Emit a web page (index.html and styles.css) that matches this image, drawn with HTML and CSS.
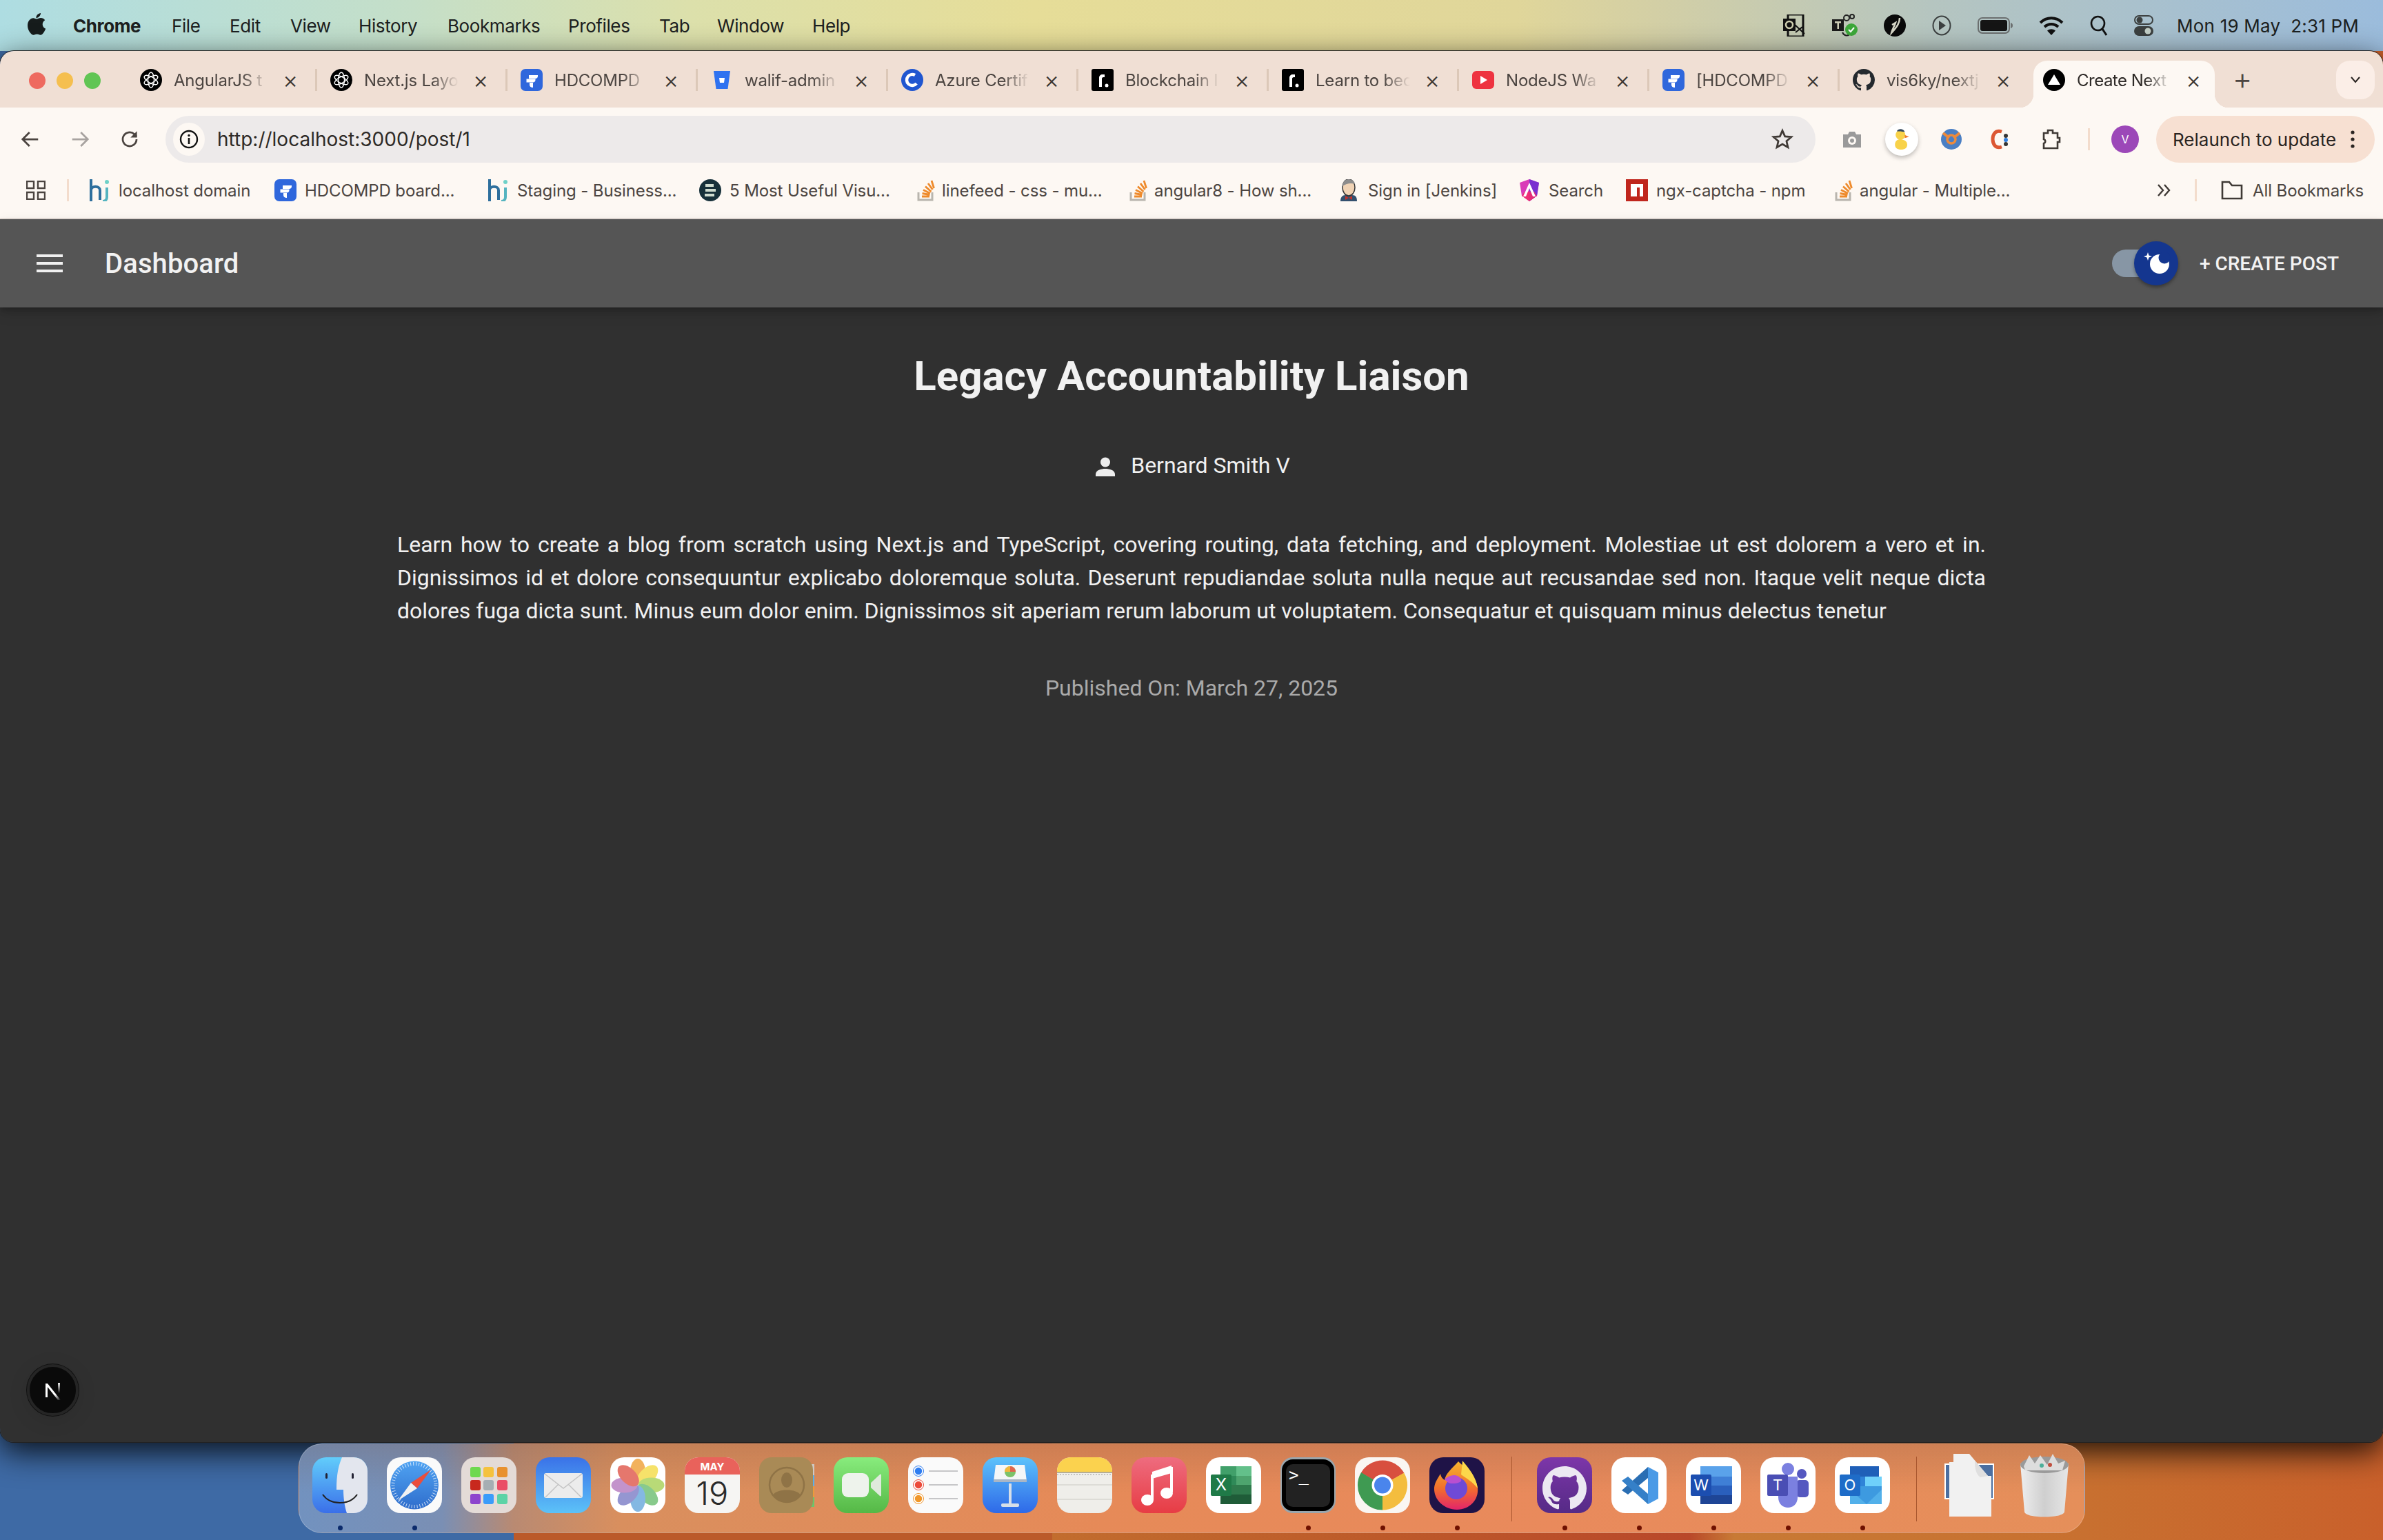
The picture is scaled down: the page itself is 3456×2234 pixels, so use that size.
FILE: index.html
```html
<!DOCTYPE html>
<html lang="en">
<head>
<meta charset="utf-8">
<title>Create Next App</title>
<link rel="stylesheet" href="styles.css">
</head>
<body>
<svg class="defs" aria-hidden="true">
  <defs>
    <linearGradient id="gFinder" x1="0" y1="0" x2="0" y2="1"><stop offset="0" stop-color="#62cdfb"/><stop offset="1" stop-color="#3a6fe9"/></linearGradient>
    <linearGradient id="gSafari" x1="0" y1="0" x2="0" y2="1"><stop offset="0" stop-color="#4fa3f2"/><stop offset="1" stop-color="#2f6dcc"/></linearGradient>
    <linearGradient id="gMail" x1="0" y1="0" x2="0" y2="1"><stop offset="0" stop-color="#3a72e8"/><stop offset="1" stop-color="#5cc2f8"/></linearGradient>
    <linearGradient id="gFace" x1="0" y1="0" x2="0" y2="1"><stop offset="0" stop-color="#88ec7d"/><stop offset="1" stop-color="#55b846"/></linearGradient>
    <linearGradient id="gKey" x1="0" y1="0" x2="0" y2="1"><stop offset="0" stop-color="#5cc2fb"/><stop offset="1" stop-color="#2e69e8"/></linearGradient>
    <linearGradient id="gMusic" x1="0" y1="0" x2="0" y2="1"><stop offset="0" stop-color="#ee6c7f"/><stop offset="1" stop-color="#e73c44"/></linearGradient>
    <linearGradient id="gHub" x1="0" y1="0" x2="0" y2="1"><stop offset="0" stop-color="#7d36a9"/><stop offset="1" stop-color="#552a86"/></linearGradient>
    <linearGradient id="gFox" x1="0" y1="0" x2="0" y2="1"><stop offset="0" stop-color="#f5b52e"/><stop offset=".55" stop-color="#f2702c"/><stop offset="1" stop-color="#e3246a"/></linearGradient>
    <linearGradient id="gTrash" x1="0" y1="0" x2="1" y2="0"><stop offset="0" stop-color="#eeeeee"/><stop offset=".5" stop-color="#cfcfcf"/><stop offset="1" stop-color="#e6e6e6"/></linearGradient>
    <linearGradient id="gN" gradientUnits="userSpaceOnUse" x1="4" y1="3" x2="25" y2="28"><stop offset=".65" stop-color="#fff"/><stop offset="1" stop-color="#fff" stop-opacity="0"/></linearGradient>
    <linearGradient id="gN2" gradientUnits="userSpaceOnUse" x1="0" y1="2" x2="0" y2="18"><stop offset="0" stop-color="#fff"/><stop offset="1" stop-color="#fff" stop-opacity="0"/></linearGradient>
    <symbol id="f-gpt" viewBox="0 0 32 32"><circle cx="16" cy="16" r="16" fill="#000"/><g fill="none" stroke="#fff" stroke-width="1.400"><ellipse cx="16" cy="16" rx="4.500" ry="11"/><ellipse cx="16" cy="16" rx="4.500" ry="11" transform="rotate(60 16 16)"/><ellipse cx="16" cy="16" rx="4.500" ry="11" transform="rotate(120 16 16)"/></g></symbol>
    <symbol id="f-jira" viewBox="0 0 32 32"><rect width="32" height="32" rx="7" fill="#2f67dc"/><path d="M12 9h13v1.5c0 2-1.500 3.500-3.500 3.500H12z M8.500 14.500h13V16c0 2-1.500 3.500-3.500 3.500H8.500z M13 20h5v7c-3 0-5-1.500-5-4z" fill="#fff"/></symbol>
    <symbol id="f-hi" viewBox="0 0 32 32"><path d="M4 0v32M4 16c0-7 13-7 13 0v14" fill="none" stroke="#2e6f9d" stroke-width="4"/><path d="M27 12v14c0 3-2 6-6 6" fill="none" stroke="#55b4c0" stroke-width="4"/><circle cx="27" cy="4" r="3" fill="#6fd1c8"/></symbol>
    <symbol id="f-so" viewBox="0 0 32 32"><path d="M4 19v11h20V19" fill="none" stroke="#b9b5ae" stroke-width="3"/><path d="M9 25h11M9.500 20.500l11 2M11 15.500l10 5M14 10.500l8.500 7.500M18 6l6.500 9M23 2l3.500 11" stroke="#ee8a2b" stroke-width="2.800" fill="none"/></symbol>
    <symbol id="f-gh" viewBox="0 0 24 24"><path fill="currentColor" d="M12 0C5.370 0 0 5.370 0 12c0 5.310 3.435 9.795 8.205 11.385.6.105.825-.255.825-.57 0-.285-.015-1.230-.015-2.235-3.015.555-3.795-.735-4.035-1.410-.135-.345-.72-1.410-1.230-1.695-.42-.225-1.020-.78-.015-.795.945-.015 1.620.87 1.845 1.230 1.080 1.815 2.805 1.305 3.495.99.105-.78.42-1.305.765-1.605-2.670-.3-5.460-1.335-5.460-5.925 0-1.305.465-2.385 1.230-3.225-.12-.3-.54-1.530.12-3.180 0 0 1.005-.315 3.300 1.230.96-.27 1.980-.405 3-.405s2.040.135 3 .405c2.295-1.560 3.300-1.230 3.300-1.230.66 1.650.24 2.880.12 3.180.765.84 1.230 1.905 1.230 3.225 0 4.605-2.805 5.625-5.475 5.925.435.375.81 1.095.81 2.220 0 1.605-.015 2.895-.015 3.300 0 .315.225.69.825.57A12.020 12.020 0 0 0 24 12c0-6.630-5.370-12-12-12z"/></symbol>
    <symbol id="f-r" viewBox="0 0 32 32"><rect width="32" height="32" rx="3" fill="#000"/><path d="M11 26V13c0-3 2-5 5-5h3v4h-2c-1 0-2 1-2 2v12z" fill="#fff"/><circle cx="22" cy="24" r="2.500" fill="#fff"/></symbol>
  </defs>
</svg>

<div class="desktop">
  <header class="menubar">
    <svg class="apple" viewBox="0 0 26 32"><path fill="#161c1c" d="M19 0c.2 3.600-3.300 7.200-6.600 7C12 3.600 15.800.2 19 0zM13 8.500c1.500 0 3.600-1.500 6.200-1.500 2.300 0 4.600 1.100 6 3.200-5.200 3-4.300 10.500 1 12.500-1.400 3.500-4.300 9-7.500 9-1.800 0-2.800-1.200-5-1.200s-3.300 1.200-5 1.200C4.800 31.700 0 24.500 0 18 0 11.500 4.200 7.200 8.300 7.200c2 0 3.500 1.300 4.700 1.300z"/></svg>
    <nav class="menus">
      <span class="menu menu-app">Chrome</span><span class="menu">File</span><span class="menu">Edit</span><span class="menu">View</span><span class="menu">History</span><span class="menu">Bookmarks</span><span class="menu">Profiles</span><span class="menu">Tab</span><span class="menu">Window</span><span class="menu">Help</span>
    </nav>
    <div class="status">
      <svg class="st st-ol" viewBox="0 0 33 32"><rect x="7" y="0" width="22" height="32" fill="none" stroke="#111" stroke-width="3"/><rect x="0" y="6" width="18" height="18" fill="#111"/><circle cx="9" cy="15" r="5" fill="none" stroke="#d0d0b0" stroke-width="2.500"/><path d="M16 14l15 14M18 26l10-8" stroke="#111" stroke-width="2" fill="none"/></svg>
      <svg class="st st-teams" viewBox="0 0 37 34"><rect x="0" y="8" width="17" height="17" fill="#1a1a1a"/><rect x="4" y="11" width="9" height="2.500" fill="#d0d0b8"/><rect x="7.500" y="11" width="2.500" height="11" fill="#d0d0b8"/><circle cx="21" cy="6" r="4" fill="none" stroke="#222" stroke-width="2"/><circle cx="29" cy="4" r="3" fill="none" stroke="#222" stroke-width="2"/><path d="M15 27c3 6 8 5 10 3" fill="none" stroke="#222" stroke-width="2"/><circle cx="28" cy="23" r="9" fill="#3da83a"/><path d="M24 23l3 3 5-6" stroke="#fff" stroke-width="2" fill="none"/></svg>
      <svg class="st st-tm" viewBox="0 0 32 32"><circle cx="16" cy="16" r="16" fill="#0a0a0a"/><path d="M23 5c0 7-3 12-12 22 1-5 4-9 6-15l-5 3" fill="none" stroke="#d8d8c8" stroke-width="2.500"/></svg>
      <svg class="st st-play" viewBox="0 0 28 30"><ellipse cx="14" cy="15" rx="12.500" ry="13.500" fill="none" stroke="#3c4040" stroke-width="2"/><path d="M10 8l10 7-10 7z" fill="#3c4040"/></svg>
      <svg class="st st-batt" viewBox="0 0 51 24"><rect x="1" y="1" width="45" height="22" rx="6" fill="none" stroke="#6c7070" stroke-width="2"/><rect x="4" y="4" width="39" height="16" rx="3" fill="#151515"/><path d="M48 8c2 .5 3 2 3 4s-1 3.500-3 4z" fill="#6c7070"/></svg>
      <svg class="st st-wifi" viewBox="0 0 36 28"><path d="M2 10c9-9 23-9 32 0M8 16c6-5.500 14-5.500 20 0" fill="none" stroke="#111" stroke-width="4"/><path d="M18 28l-6-6.500c3.500-3 8.500-3 12 0z" fill="#111"/></svg>
      <svg class="st st-search" viewBox="0 0 26 30"><ellipse cx="11.500" cy="12" rx="9.500" ry="10" fill="none" stroke="#111" stroke-width="2.600"/><path d="M18 20l6 9" stroke="#111" stroke-width="3"/></svg>
      <svg class="st st-cc" viewBox="0 0 28 30"><rect x="1" y="1" width="26" height="12" rx="6" fill="none" stroke="#3c4040" stroke-width="2"/><circle cx="8" cy="7" r="4.500" fill="#3c4040"/><rect y="16" width="28" height="14" rx="7" fill="#3c4040"/><circle cx="20" cy="23" r="4.500" fill="#c4d0c8"/></svg>
      <span class="clock">Mon 19 May&nbsp;&nbsp;2:31 PM</span>
    </div>
  </header>

  <main class="window">
    <div class="tabstrip">
      <div class="lights"><span class="light light-r"></span><span class="light light-y"></span><span class="light light-g"></span></div>
      <div class="tab"><svg class="fav"><use href="#f-gpt"/></svg><span class="tab-title">AngularJS t</span><span class="tab-x">×</span></div>
      <div class="tab"><svg class="fav"><use href="#f-gpt"/></svg><span class="tab-title">Next.js Layo</span><span class="tab-x">×</span></div>
      <div class="tab"><svg class="fav"><use href="#f-jira"/></svg><span class="tab-title">HDCOMPD</span><span class="tab-x">×</span></div>
      <div class="tab"><svg class="fav" viewBox="0 0 32 32"><path d="M4 3h24l-3.500 26h-17z" fill="#2f72f0"/><path d="M12 13h8l-1 7h-6z" fill="#fff"/></svg><span class="tab-title">walif-admin</span><span class="tab-x">×</span></div>
      <div class="tab"><svg class="fav" viewBox="0 0 32 32"><circle cx="16" cy="16" r="16" fill="#2056d0"/><circle cx="16" cy="16" r="8" fill="none" stroke="#fff" stroke-width="4.500" stroke-dasharray="36 14" transform="rotate(40 16 16)"/></svg><span class="tab-title">Azure Certif</span><span class="tab-x">×</span></div>
      <div class="tab"><svg class="fav"><use href="#f-r"/></svg><span class="tab-title">Blockchain I</span><span class="tab-x">×</span></div>
      <div class="tab"><svg class="fav"><use href="#f-r"/></svg><span class="tab-title">Learn to bec</span><span class="tab-x">×</span></div>
      <div class="tab"><svg class="fav" viewBox="0 0 32 32"><rect y="3" width="32" height="26" rx="6" fill="#ee3340"/><path d="M12 10l10 6-10 6z" fill="#fff"/></svg><span class="tab-title">NodeJS Wa</span><span class="tab-x">×</span></div>
      <div class="tab"><svg class="fav"><use href="#f-jira"/></svg><span class="tab-title">[HDCOMPD</span><span class="tab-x">×</span></div>
      <div class="tab tab-gh"><svg class="fav"><use href="#f-gh"/></svg><span class="tab-title">vis6ky/nextj</span><span class="tab-x">×</span></div>
      <div class="tab tab-active"><svg class="fav" viewBox="0 0 32 32"><circle cx="16" cy="16" r="16" fill="#000"/><path d="M16 8l9 15H7z" fill="#fff"/></svg><span class="tab-title">Create Next</span><span class="tab-x">×</span></div>
      <span class="newtab">+</span>
      <span class="tabsearch"><svg viewBox="0 0 16 10" class="chev"><path d="M2 1l6 7 6-7" fill="none" stroke="#2a2522" stroke-width="2"/></svg></span>
    </div>

    <div class="toolbar">
      <span class="navbtn"><svg class="navico" viewBox="0 0 24 24"><path d="M21 12H4M11 4l-8 8 8 8" fill="none" stroke="#4b4440" stroke-width="2.200"/></svg></span>
      <span class="navbtn"><svg class="navico" viewBox="0 0 24 24"><path d="M3 12h17M13 4l8 8-8 8" fill="none" stroke="#a8a3a0" stroke-width="2.200"/></svg></span>
      <span class="navbtn"><svg class="navico" viewBox="0 0 24 24"><path d="M20 12a8 8 0 1 1-2.500-5.800L20 9" fill="none" stroke="#4b4440" stroke-width="2.200"/><path d="M20.500 2.500V10H13" fill="#4b4440" stroke="none"/></svg></span>
      <div class="omnibox">
        <span class="site-chip"><svg class="info" viewBox="0 0 28 28"><circle cx="14" cy="14" r="12" fill="none" stroke="#111" stroke-width="2.400"/><rect x="12.700" y="12" width="2.600" height="9" fill="#111"/><circle cx="14" cy="8.500" r="1.700" fill="#111"/></svg></span>
        <span class="url">http://localhost:3000/post/1</span>
        <svg class="star" viewBox="0 0 28 28"><path d="M14 3l3.200 7.400 8 .7-6 5.300 1.800 7.800L14 20.100 7 24.200l1.800-7.800-6-5.300 8-.7z" fill="none" stroke="#3f3935" stroke-width="2.400"/></svg>
      </div>
      <span class="extbtn"><svg class="ext" viewBox="0 0 32 32"><path d="M3 9h7l2-4h8l2 4h7v19H3z" fill="#9a9a9a"/><circle cx="16" cy="18" r="6" fill="#fdf8f3"/><circle cx="16" cy="18" r="3" fill="#9a9a9a"/></svg></span>
      <span class="extbtn"><span class="duck-chip"><svg class="ext" viewBox="0 0 32 36"><circle cx="14" cy="11" r="8" fill="#f8d24a"/><path d="M8 5c2-5 11-5 13 1-5-1-9-1-13-1z" fill="#34495e"/><path d="M21 11l7 3-7 2z" fill="#ef7c2b"/><path d="M5 27c0-6 4-9 9-9 5 1 11 2 11 9 0 5-4 8-10 8-6 0-10-3-10-8z" fill="#f8d24a"/></svg></span></span>
      <span class="extbtn"><svg class="ext" viewBox="0 0 32 32"><circle cx="16" cy="16" r="15" fill="#4a7fc4"/><path d="M4 7l9 7M28 7l-9 7" stroke="#ec8a3c" stroke-width="4"/><circle cx="16" cy="16" r="6" fill="none" stroke="#ec8a3c" stroke-width="3.500"/></svg></span>
      <span class="extbtn"><svg class="ext" viewBox="0 0 32 32"><path d="M17 5c-9-3-13 4-13 11s4 14 13 11" fill="none" stroke="#dc5733" stroke-width="5"/><circle cx="23" cy="11" r="3" fill="#363636"/><circle cx="23" cy="17" r="3" fill="#2f7fe0"/><circle cx="23" cy="23" r="3" fill="#363636"/></svg></span>
      <span class="extbtn"><svg class="ext" viewBox="0 0 32 32"><path d="M6 7h6V3h7v4h7v7h3v6h-3v9H6v-7c3-1 3-5 0-6z" fill="none" stroke="#3f3935" stroke-width="2.600"/></svg></span>
      <span class="tool-sep"></span>
      <span class="avatar">V</span>
      <div class="relaunch"><span>Relaunch to update</span><svg class="dots" viewBox="0 0 6 26"><circle cx="3" cy="3" r="2.600"/><circle cx="3" cy="13" r="2.600"/><circle cx="3" cy="23" r="2.600"/></svg></div>
    </div>

    <div class="bookmarks">
      <svg class="apps" viewBox="0 0 28 28"><path d="M1 1h10v10H1zM17 1h10v10H17zM1 17h10v10H1zM17 17h10v10H17z" fill="none" stroke="#4b4440" stroke-width="2.400"/></svg>
      <span class="bm-sep"></span>
      <div class="bm-list">
        <span class="bm"><svg class="fav"><use href="#f-hi"/></svg>localhost domain</span>
        <span class="bm"><svg class="fav"><use href="#f-jira"/></svg>HDCOMPD board...</span>
        <span class="bm"><svg class="fav"><use href="#f-hi"/></svg>Staging - Business...</span>
        <span class="bm"><svg class="fav" viewBox="0 0 32 32"><circle cx="16" cy="16" r="16" fill="#16303a"/><path d="M9 9h12M9 16h15M8 23h14" stroke="#cfdcd0" stroke-width="4"/></svg>5 Most Useful Visu...</span>
        <span class="bm bm-so"><svg class="fav"><use href="#f-so"/></svg>linefeed - css - mu...</span>
        <span class="bm bm-so"><svg class="fav"><use href="#f-so"/></svg>angular8 - How sh...</span>
        <span class="bm"><svg class="fav" viewBox="0 0 32 32"><path d="M4 32c0-6 3-9 7-9l10 0c5 0 7 3 7 9z" fill="#33506e"/><ellipse cx="16" cy="12" rx="9" ry="12" fill="#f0d3b5" stroke="#333" stroke-width="1.500"/><path d="M7 10C7 3 12 0 16 0s9 3 9 7c-6-2-12-1-18 3z" fill="#8d8d8d"/><path d="M11 24l5 3 5-3v6l-5-3-5 3z" fill="#c0322a"/></svg>Sign in [Jenkins]</span>
        <span class="bm"><svg class="fav" viewBox="0 0 32 32"><path d="M16 0L2 5l3 19 11 8 11-8 3-19z" fill="#d93bb8"/><path d="M16 0l14 5-3 19-11 8z" fill="#7a30d0"/><path d="M5 24l11 8 11-8-4-6H9z" fill="#f02d6e" opacity=".9"/><path d="M16 5l-9 20h4l5-12 5 12h4z" fill="#fff"/></svg>Search</span>
        <span class="bm"><svg class="fav" viewBox="0 0 32 32"><rect width="32" height="32" fill="#c0261d"/><path d="M7 7h18v18h-5V12h-4v13H7z" fill="#fff"/></svg>ngx-captcha - npm</span>
        <span class="bm bm-so"><svg class="fav"><use href="#f-so"/></svg>angular - Multiple...</span>
      </div>
      <svg class="more" viewBox="0 0 22 22"><path d="M3 3l7 8-7 8M12 3l7 8-7 8" fill="none" stroke="#3f3935" stroke-width="2.400"/></svg>
      <span class="bm-sep bm-sep-r"></span>
      <span class="bm bm-all"><svg class="fav" viewBox="0 0 32 32"><path d="M2 4h10l4 5h14v19H2z" fill="none" stroke="#3f3935" stroke-width="2.600"/></svg>All Bookmarks</span>
    </div>

    <div class="app">
      <div class="appbar">
        <svg class="burger" viewBox="0 0 38 26"><path d="M0 2h38M0 13h38M0 24h38" stroke="#f0f0f0" stroke-width="3.800"/></svg>
        <span class="brand">Dashboard</span>
        <div class="toggle"><span class="thumb"><svg class="moon" viewBox="0 0 64 64"><path d="M20 16l1.500 4.500L26 22l-4.500 1.500L20 28l-1.500-4.500L14 22l4.500-1.500z" fill="#fff"/><circle cx="37" cy="33" r="14" fill="#fff"/><circle cx="44" cy="24" r="8.500" fill="#14368f"/></svg></span></div>
        <span class="create">+ Create Post</span>
      </div>
      <article class="post">
        <h1 class="post-title">Legacy Accountability Liaison</h1>
        <div class="author"><svg class="person" viewBox="0 0 28 28"><circle cx="14" cy="7.500" r="7" fill="#eeeeee"/><path d="M0 28v-3c0-6 8-8 14-8s14 2 14 8v3z" fill="#eeeeee"/></svg><span>Bernard Smith V</span></div>
        <p class="post-body">Learn how to create a blog from scratch using Next.js and TypeScript, covering routing, data fetching, and deployment. Molestiae ut est dolorem a vero et in. Dignissimos id et dolore consequuntur explicabo doloremque soluta. Deserunt repudiandae soluta nulla neque aut recusandae sed non. Itaque velit neque dicta dolores fuga dicta sunt. Minus eum dolor enim. Dignissimos sit aperiam rerum laborum ut voluptatem. Consequatur et quisquam minus delectus tenetur</p>
        <p class="post-date">Published On: March 27, 2025</p>
      </article>
      <span class="next-badge"><svg class="next-n" viewBox="0 0 28 28"><path d="M3 24V4h3l19 24h-4L6 9v15z" fill="url(#gN)"/><rect x="21" y="3" width="3" height="16" fill="url(#gN2)"/></svg></span>
    </div>
  </main>

  <footer class="dock">
    <span class="dock-app run run-b"><svg class="ico" viewBox="0 0 80 81"><rect width="80" height="81" rx="20" fill="url(#gFinder)"/><path d="M43 0C38 12 35 24 35 47h10c0 13 2 25 5 34h10a20 20 0 0 0 20-20V20A20 20 0 0 0 60 0z" fill="#e3e6ee"/><rect x="19" y="23" width="3" height="8" rx="1.500" fill="#223"/><rect x="57" y="23" width="3" height="8" rx="1.500" fill="#223"/><path d="M15 54c11 16 39 16 50 0" fill="none" stroke="#222" stroke-width="2"/></svg></span>
    <span class="dock-app run run-b"><svg class="ico" viewBox="0 0 80 81"><rect width="80" height="81" rx="20" fill="#fafafa"/><circle cx="40" cy="40.500" r="35" fill="url(#gSafari)"/><circle cx="40" cy="40.500" r="31" fill="none" stroke="#fff" stroke-width="5" stroke-dasharray="1 3" opacity=".75"/><path d="M64 18L35 37l9 8z" fill="#ea4e3c"/><path d="M16 63l19-26 9 8z" fill="#f2f2f2"/></svg></span>
    <span class="dock-app"><svg class="ico" viewBox="0 0 80 81"><rect width="80" height="81" rx="20" fill="#e4dbd7"/><rect x="13" y="14" width="15" height="15" rx="3" fill="#6ed94f"/><rect x="32" y="14" width="15" height="15" rx="3" fill="#f5c23e"/><rect x="52" y="14" width="15" height="15" rx="3" fill="#e8912f"/><rect x="13" y="33" width="15" height="15" rx="3" fill="#c8281d"/><rect x="32" y="33" width="15" height="15" rx="3" fill="#a5aeb3"/><rect x="52" y="33" width="15" height="15" rx="3" fill="#ea4e66"/><rect x="13" y="53" width="15" height="15" rx="3" fill="#8d44cd"/><rect x="32" y="53" width="15" height="15" rx="3" fill="#3b9cfa"/><rect x="52" y="53" width="15" height="15" rx="3" fill="#5cd3a6"/></svg></span>
    <span class="dock-app"><svg class="ico" viewBox="0 0 80 81"><rect width="80" height="81" rx="20" fill="url(#gMail)"/><rect x="12" y="23" width="56" height="36" rx="3" fill="#ececec"/><path d="M13 24l27 21 27-21M14 58l19-19M66 58L47 39" fill="none" stroke="#c4c4c4" stroke-width="1.500"/></svg></span>
    <span class="dock-app"><svg class="ico" viewBox="0 0 80 81"><rect width="80" height="81" rx="20" fill="#fff"/><g opacity=".82"><ellipse cx="40" cy="21" rx="11" ry="19" fill="#f0a23a"/><ellipse cx="40" cy="21" rx="11" ry="19" fill="#f5dc4a" transform="rotate(45 40 40.500)"/><ellipse cx="40" cy="21" rx="11" ry="19" fill="#a9d25a" transform="rotate(90 40 40.500)"/><ellipse cx="40" cy="21" rx="11" ry="19" fill="#6fbf73" transform="rotate(135 40 40.500)"/><ellipse cx="40" cy="21" rx="11" ry="19" fill="#6aa9dc" transform="rotate(180 40 40.500)"/><ellipse cx="40" cy="21" rx="11" ry="19" fill="#7e7fc8" transform="rotate(225 40 40.500)"/><ellipse cx="40" cy="21" rx="11" ry="19" fill="#b77cc0" transform="rotate(270 40 40.500)"/><ellipse cx="40" cy="21" rx="11" ry="19" fill="#e05a4e" transform="rotate(315 40 40.500)"/></g></svg></span>
    <span class="dock-app"><svg class="ico" viewBox="0 0 80 81"><rect width="80" height="81" rx="20" fill="#f6f5f3"/><path d="M0 25V20A20 20 0 0 1 20 0h40a20 20 0 0 1 20 20v5z" fill="#e9625b"/><text x="40" y="19" class="cal-m">MAY</text><text x="40" y="69" class="cal-d">19</text></svg></span>
    <span class="dock-app"><svg class="ico" viewBox="0 0 80 81"><rect x="70" y="10" width="10" height="16" fill="#cfcac5"/><rect x="70" y="26" width="10" height="16" fill="#5ab0ec"/><rect x="70" y="42" width="10" height="16" fill="#ec9a3a"/><rect x="70" y="58" width="10" height="14" fill="#6cc56a"/><rect width="78" height="81" rx="18" fill="#a98a56"/><ellipse cx="40" cy="40" rx="25" ry="25" fill="none" stroke="#8f7346" stroke-width="2.500"/><ellipse cx="40" cy="33" rx="8" ry="11" fill="#8f7346"/><path d="M20 55c4-10 36-10 40 0-8 14-32 14-40 0z" fill="#8f7346"/></svg></span>
    <span class="dock-app"><svg class="ico" viewBox="0 0 80 81"><rect width="80" height="81" rx="20" fill="url(#gFace)"/><rect x="12" y="23" width="39" height="35" rx="9" fill="#eef3ec"/><path d="M54 37l13-12c1-1 2 0 2 1v29c0 1-1 2-2 1L54 44z" fill="#dfeadc"/></svg></span>
    <span class="dock-app"><svg class="ico" viewBox="0 0 80 81"><rect width="80" height="81" rx="20" fill="#fafafa"/><circle cx="15" cy="20" r="6" fill="#2f7df0" stroke="#fff" stroke-width="1.500"/><circle cx="15" cy="20" r="7.500" fill="none" stroke="#2f7df0"/><circle cx="15" cy="40" r="6" fill="#ec4a3a" stroke="#fff" stroke-width="1.500"/><circle cx="15" cy="40" r="7.500" fill="none" stroke="#ec4a3a"/><circle cx="15" cy="60" r="6" fill="#f0962a" stroke="#fff" stroke-width="1.500"/><circle cx="15" cy="60" r="7.500" fill="none" stroke="#f0962a"/><path d="M30 20h42M30 40h42M30 60h42" stroke="#c6c6c8" stroke-width="2"/></svg></span>
    <span class="dock-app"><svg class="ico" viewBox="0 0 80 81"><rect width="80" height="81" rx="20" fill="url(#gKey)"/><path d="M19 11h42l3 24H16z" fill="#f4f6f8"/><rect x="16" y="32" width="48" height="4" fill="#a9b6c6"/><rect x="38" y="38" width="4" height="32" fill="#d7dfe8"/><rect x="27" y="67" width="26" height="5" rx="2" fill="#d7dfe8"/><circle cx="40" cy="21" r="8" fill="#7cc26a"/><path d="M40 21V13a8 8 0 0 1 8 8z" fill="#e0654f"/><path d="M40 21V13a8 8 0 0 0-8 8z" fill="#f2b63c"/></svg></span>
    <span class="dock-app"><svg class="ico" viewBox="0 0 80 81"><rect width="80" height="81" rx="20" fill="#efeeea"/><path d="M0 21A20 20 0 0 1 20 0h40a20 20 0 0 1 20 20v1z" fill="#fbd24e"/><path d="M0 22h80" stroke="#b5ad92" stroke-width="2"/><path d="M0 25h80" stroke="#c4c4c0" stroke-width="2" stroke-dasharray="2 2"/><path d="M0 40h80M0 61h80" stroke="#d8d6d1" stroke-width="1.500"/></svg></span>
    <span class="dock-app"><svg class="ico" viewBox="0 0 80 81"><rect width="80" height="81" rx="20" fill="url(#gMusic)"/><path d="M30 25v37M58 14v36" stroke="#fff" stroke-width="4"/><path d="M30 21l28-9v11l-28 8z" fill="#fff"/><ellipse cx="23" cy="62" rx="9" ry="8" fill="#fff"/><ellipse cx="51" cy="52" rx="9" ry="8" fill="#fff"/></svg></span>
    <span class="dock-app"><svg class="ico" viewBox="0 0 80 81"><rect width="80" height="81" rx="20" fill="#fff"/><rect x="21" y="13" width="25" height="14" fill="#41a06a"/><rect x="44" y="13" width="22" height="14" fill="#63c08a"/><rect x="21" y="27" width="25" height="13" fill="#2f8a58"/><rect x="44" y="27" width="22" height="13" fill="#4ea46e"/><rect x="21" y="40" width="45" height="14" fill="#2f7a4c"/><rect x="21" y="54" width="45" height="14" fill="#1f5c38"/><rect x="7" y="25" width="30" height="31" rx="2" fill="#1f7a47"/><text x="22" y="48" class="tile-l tile-x">X</text></svg></span>
    <span class="dock-app run"><svg class="ico" viewBox="0 0 80 81"><rect width="80" height="81" rx="18" fill="#9aa6ac"/><rect x="2" y="3" width="76" height="75" rx="16" fill="#000"/><rect x="8" y="10" width="64" height="62" rx="10" fill="#222"/><text x="12" y="34" class="term">&gt;_</text></svg></span>
    <span class="dock-app run"><svg class="ico" viewBox="0 0 80 81"><rect width="80" height="81" rx="20" fill="#faf6f2"/><g fill="none" stroke-width="24"><circle cx="40" cy="40.500" r="24" stroke="#d84f3f" stroke-dasharray="50.300 100.500" transform="rotate(-150 40 40.500)"/><circle cx="40" cy="40.500" r="24" stroke="#f4bd3e" stroke-dasharray="50.300 100.500" transform="rotate(-30 40 40.500)"/><circle cx="40" cy="40.500" r="24" stroke="#3f9a52" stroke-dasharray="50.300 100.500" transform="rotate(90 40 40.500)"/></g><circle cx="40" cy="40.500" r="15.500" fill="#fff"/><circle cx="40" cy="40.500" r="12" fill="#4a85ec"/></svg></span>
    <span class="dock-app run"><svg class="ico" viewBox="0 0 80 81"><rect width="80" height="81" rx="20" fill="#1f1347"/><path d="M42 6c10 10 25 20 28 38 2 18-12 32-30 32S6 62 7 44c1-8 5-13 9-20 1 5 3 7 6 9 2-10 10-16 20-27z" fill="url(#gFox)"/><path d="M48 5c10 12 20 24 22 40-8-10-16-14-24-20z" fill="#fcd84a"/><circle cx="39" cy="45" r="16" fill="#6f4ad6"/><path d="M22 32c8-8 20-8 24 0 2 4-6 6-12 6s-8-2-12-6z" fill="#b94fd0"/></svg></span>
    <span class="dock-sep dock-sep-a"></span>
    <span class="dock-app run"><svg class="ico" viewBox="0 0 80 81"><rect width="80" height="81" rx="20" fill="url(#gHub)"/><svg class="hub-mark" x="5" y="13" width="70" height="64" viewBox="0 0 24 24"><use href="#f-gh"/></svg></svg></span>
    <span class="dock-app run"><svg class="ico" viewBox="0 0 80 81"><rect width="80" height="81" rx="20" fill="#fff"/><path d="M53 14l15 8v38l-15 8z" fill="#4a9ae6"/><path d="M53 14v16L24 54l-9-6z" fill="#2a6eb3"/><path d="M15 34l9-6 29 25v15z" fill="#3580c8"/></svg></span>
    <span class="dock-app run"><svg class="ico" viewBox="0 0 80 81"><rect width="80" height="81" rx="20" fill="#fff"/><rect x="21" y="13" width="46" height="15" fill="#5aa2ea"/><rect x="21" y="28" width="46" height="13" fill="#3f7fd6"/><rect x="21" y="41" width="46" height="14" fill="#2a5fbc"/><rect x="21" y="55" width="46" height="13" fill="#1e4596"/><rect x="7" y="25" width="30" height="31" rx="2" fill="#1c4eb0"/><text x="22" y="48" class="tile-l">W</text></svg></span>
    <span class="dock-app run"><svg class="ico" viewBox="0 0 80 81"><rect width="80" height="81" rx="20" fill="#fff"/><circle cx="60" cy="24" r="7" fill="#5558c0"/><rect x="52" y="33" width="18" height="25" rx="5" fill="#5558c0"/><circle cx="40" cy="17" r="9" fill="#7b80e0"/><path d="M26 28h28v30c0 20-28 20-28 0z" fill="#7b80e0"/><rect x="10" y="25" width="30" height="31" rx="2" fill="#4a4eb4"/><text x="25" y="48" class="tile-l">T</text></svg></span>
    <span class="dock-app run"><svg class="ico" viewBox="0 0 80 81"><rect width="80" height="81" rx="20" fill="#fff"/><rect x="22" y="13" width="42" height="15" fill="#1f5fb8"/><rect x="22" y="28" width="22" height="14" fill="#2f83d8"/><rect x="44" y="28" width="24" height="14" fill="#6fd0fa"/><rect x="22" y="42" width="46" height="26" fill="#3d9ae0"/><path d="M22 47l24 21H22zM68 47L46 68h22z" fill="#52b0ea"/><rect x="7" y="25" width="30" height="31" rx="2" fill="#1e6cc8"/><text x="22" y="48" class="tile-l">O</text></svg></span>
    <span class="dock-sep dock-sep-b"></span>
    <span class="dock-app dock-tall"><svg class="tall" viewBox="0 0 72 92"><rect x="0" y="14" width="72" height="52" fill="#fff"/><rect x="2" y="16" width="68" height="48" fill="#4c6fa0"/><path d="M13 0h23l27 32h5v59H7V12h6z" fill="#f1f1f1"/><path d="M44 10l19 22-11 2c-6-4-8-12-8-24z" fill="#dfdfdf"/></svg></span>
    <span class="dock-app dock-tall"><svg class="tall" viewBox="0 0 72 92"><path d="M1 14c8 6 62 6 70 0l-6 70c-1 10-57 10-58 0z" fill="url(#gTrash)"/><ellipse cx="36" cy="16" rx="35" ry="12" fill="#9a9a9a"/><path d="M6 18l8-16 8 12 8-12 10 14 8-16 8 14 10-4-4 14H8z" fill="#ddd"/><circle cx="32" cy="17" r="3" fill="#4caf9a"/><circle cx="44" cy="16" r="3" fill="#c05040"/></svg></span>
  </footer>
</div>
</body>
</html>
```

FILE: styles.css
```css
* { box-sizing: border-box; }

html, body { margin: 0; padding: 0; }

body {
  width: 3456px;
  height: 2234px;
  overflow: hidden;
  font-family: Inter, "Liberation Sans", sans-serif;
}

.defs { position: absolute; width: 0; height: 0; }

.desktop {
  width: 3456px;
  height: 2234px;
  display: flex;
  flex-direction: column;
  background: linear-gradient(90deg, #3e6aa5 0, #3e6aa5 745px, #bb5a2a 745px, #bb5a2a 1526px, #c26d2e 1526px, #bd5a2a 2000px, #b9482a 2450px, #c87a35 2515px, #c87030 3024px, #c9602b 3456px);
}

/* menu bar */
.menubar {
  height: 74px;
  flex: none;
  display: flex;
  align-items: center;
  padding: 0 35px 0 40px;
  color: #1c2020;
  font-size: 26px;
  background: linear-gradient(90deg, #aedde2 0, #c5dfc8 600px, #dce0ab 1000px, #e6dd98 1500px, #e0d69a 2200px, #d3cfa5 2400px, #b5c5c0 2800px, #9bbcdc 3456px);
}
.apple { width: 26px; height: 32px; margin-right: 40px; margin-top: -4px; }
.menus {
  display: grid;
  grid-template-columns: 143px 84px 88px 99px 129px 175px 132px 84px 138px auto;
}
.menu { letter-spacing: -0.4px; white-space: nowrap; }
.menu-app { font-weight: 700; }
.status { margin-left: auto; display: flex; align-items: center; gap: 38px; }
.st { display: block; }
.st-ol { width: 33px; height: 32px; }
.st-teams { width: 37px; height: 34px; }
.st-tm { width: 32px; height: 32px; }
.st-play { width: 28px; height: 30px; }
.st-batt { width: 51px; height: 24px; }
.st-wifi { width: 36px; height: 28px; }
.st-search { width: 26px; height: 30px; }
.st-cc { width: 28px; height: 30px; }
.clock { letter-spacing: .2px; white-space: nowrap; margin-left: -4px; }

/* browser window */
.window {
  height: 2018px;
  flex: none;
  display: flex;
  flex-direction: column;
  border-radius: 20px;
  overflow: hidden;
  position: relative;
  box-shadow: 0 0 0 1px #222, 0 14px 46px rgba(0, 0, 0, .85);
}

.tabstrip {
  height: 82px;
  flex: none;
  display: flex;
  align-items: flex-end;
  background: #f0dfd4;
  padding-right: 12px;
  position: relative;
}
.lights {
  display: flex;
  gap: 16px;
  width: 203px;
  flex: none;
  align-self: flex-end;
  height: 68px;
  padding: 17px 0 0 42px;
}
.light { width: 24px; height: 24px; border-radius: 50%; }
.light-r { background: #ee6a5f; }
.light-y { background: #f5bf4f; }
.light-g { background: #61c554; }

.tab {
  width: 276px;
  height: 68px;
  flex: none;
  display: flex;
  align-items: center;
  padding-bottom: 12px;
  position: relative;
  color: #4c4541;
  font-size: 24px;
}
.tab + .tab::before {
  content: "";
  position: absolute;
  left: -22px;
  top: 12px;
  width: 3px;
  height: 32px;
  background: #dcc8b8;
}
.tab-active::before, .tab + .tab-active::before { display: none; }
.fav { width: 32px; height: 32px; flex: none; display: block; }
.tab-gh .fav { color: #24292e; }
.tab-title {
  width: 137px;
  margin-left: 17px;
  overflow: hidden;
  white-space: nowrap;
  letter-spacing: -0.2px;
  -webkit-mask-image: linear-gradient(90deg, #000 72%, transparent);
  mask-image: linear-gradient(90deg, #000 72%, transparent);
}
.tab-x {
  width: 24px;
  margin-left: 20px;
  text-align: center;
  font-size: 34px;
  font-weight: 300;
  line-height: 1;
  color: #3a3430;
}
.tab-active {
  width: 263px;
  margin-left: -14px;
  padding-left: 14px;
  background: #fdf8f3;
  border-radius: 20px 20px 0 0;
  color: #2e2a27;
}
.tab-active .tab-title { letter-spacing: -0.5px; }
.tab-active::after, .newtab::before {
  content: "";
  position: absolute;
  bottom: 0;
  width: 20px;
  height: 20px;
}
.tab-active::after {
  left: -20px;
  background: radial-gradient(circle at 0 0, transparent 20px, #fdf8f3 20.500px);
}
.newtab {
  width: 36px;
  margin-left: 22px;
  height: 56px;
  margin-bottom: 12px;
  font-size: 44px;
  font-weight: 300;
  line-height: 52px;
  text-align: center;
  color: #4c4541;
  position: relative;
}
.newtab::before {
  left: -22px;
  bottom: -12px;
  background: radial-gradient(circle at 100% 0, transparent 20px, #fdf8f3 20.500px);
}
.tabsearch {
  width: 56px;
  height: 56px;
  margin: 0 0 12px auto;
  background: #fbeee7;
  border-radius: 20px;
  display: flex;
  align-items: center;
  justify-content: center;
}
.chev { width: 16px; height: 10px; display: block; }

/* toolbar */
.toolbar {
  height: 80px;
  flex: none;
  display: flex;
  align-items: flex-start;
  padding: 12px 0 0 8px;
  background: #fdf8f3;
}
.navbtn {
  width: 72px;
  height: 68px;
  flex: none;
  display: flex;
  align-items: center;
  justify-content: center;
}
.navico { width: 30px; height: 30px; display: block; }
.omnibox {
  width: 2393px;
  height: 68px;
  flex: none;
  margin-left: 16px;
  margin-right: 17px;
  background: #edeaea;
  border-radius: 34px;
  display: flex;
  align-items: center;
  padding: 0 32px 0 11px;
}
.site-chip {
  width: 46px;
  height: 48px;
  flex: none;
  border-radius: 50%;
  background: #fdf8f3;
  display: flex;
  align-items: center;
  justify-content: center;
}
.info { width: 28px; height: 28px; display: block; }
.url {
  margin-left: 18px;
  font-size: 28px;
  color: #2e2a27;
  white-space: nowrap;
}
.star { width: 32px; height: 32px; margin-left: auto; display: block; }
.extbtn {
  width: 72px;
  height: 68px;
  flex: none;
  display: flex;
  align-items: center;
  justify-content: center;
}
.ext { width: 32px; height: 32px; display: block; }
.duck-chip {
  width: 48px;
  height: 48px;
  border-radius: 50%;
  background: #fff;
  box-shadow: 0 3px 6px rgba(0, 0, 0, .25);
  display: flex;
  align-items: center;
  justify-content: center;
}
.tool-sep {
  width: 3px;
  height: 32px;
  margin: 18px 31px 0 18px;
  background: #f3dccc;
  flex: none;
}
.avatar {
  width: 40px;
  height: 40px;
  margin-top: 14px;
  border-radius: 50%;
  background: #9c48b8;
  color: #fff;
  font-size: 16px;
  display: flex;
  align-items: center;
  justify-content: center;
  flex: none;
}
.relaunch {
  width: 317px;
  height: 68px;
  margin-left: 25px;
  flex: none;
  border-radius: 34px;
  background: #f7e0d2;
  color: #2a2522;
  font-size: 26px;
  display: flex;
  align-items: center;
  padding: 0 29px 0 24px;
  white-space: nowrap;
}
.dots { width: 6px; height: 26px; margin-left: auto; fill: #2a2522; }

/* bookmarks */
.bookmarks {
  height: 82px;
  flex: none;
  padding: 0 0 0 38px;
  display: flex;
  align-items: center;
  background: #fdf8f3;
  border-bottom: 2px solid #e8e0da;
  color: #4c4541;
  font-size: 24px;
  letter-spacing: -0.1px;
}
.apps { width: 28px; height: 28px; flex: none; display: block; }
.bm-sep { width: 3px; height: 32px; margin: 0 28px 0 31px; background: #f3dccc; flex: none; }
.bm-list {
  display: grid;
  grid-template-columns: 270px 308px 308px 314px 308px 304px 262px 156px 301px 291px;
  flex: none;
  width: 2822px;
}
.bm { display: flex; align-items: center; gap: 12px; white-space: nowrap; }
.bm-so { gap: 6px; }
.more { width: 22px; height: 22px; margin-left: 177px; flex: none; display: block; }
.bm-sep-r { margin: 0 35px 0 34px; }
.bm-all { gap: 14px; }

/* page */
.app {
  flex: 1;
  position: relative;
  background: #303030;
  display: flex;
  flex-direction: column;
  font-family: Roboto, sans-serif;
}
.appbar {
  height: 128px;
  flex: none;
  display: flex;
  align-items: center;
  padding: 0 64px 0 53px;
  background: #555;
  box-shadow: 0 4px 8px -1px rgba(0, 0, 0, .25), 0 8px 20px rgba(0, 0, 0, .12);
  color: #f2f2f2;
  position: relative;
}
.burger { width: 38px; height: 26px; flex: none; display: block; }
.brand { margin-left: 61px; font-size: 40px; font-weight: 500; letter-spacing: .1px; }
.toggle {
  width: 84px;
  height: 40px;
  margin-left: auto;
  border-radius: 20px;
  background: #8796a5;
  position: relative;
  flex: none;
}
.thumb {
  position: absolute;
  left: 32px;
  top: -12px;
  width: 64px;
  height: 64px;
  border-radius: 50%;
  background: #14368f;
  box-shadow: 0 3px 5px rgba(0, 0, 0, .35);
}
.moon { width: 64px; height: 64px; display: block; }
.create {
  margin-left: 43px;
  font-size: 28px;
  font-weight: 500;
  text-transform: uppercase;
}

.post {
  flex: 1;
  padding: 58px 0 0;
  width: 2304px;
  margin: 0 auto;
  color: #f1f1f1;
  text-align: center;
}
.post-title {
  margin: 0 0 63px;
  font-size: 60px;
  line-height: 84px;
  font-weight: 700;
}
.author {
  height: 48px;
  display: flex;
  align-items: center;
  justify-content: center;
  gap: 23px;
  padding-left: 4px;
  font-size: 32px;
  margin-bottom: 67px;
}
.person { width: 28px; height: 28px; display: block; flex: none; margin-top: 3px; }
.post-body {
  margin: 0 0 64px;
  font-size: 32px;
  line-height: 48px;
  text-align: justify;
}
.post-date {
  margin: 0;
  font-size: 32px;
  line-height: 48px;
  color: #aaaaaa;
}
.next-badge {
  position: absolute;
  left: 39px;
  bottom: 38px;
  width: 75px;
  height: 75px;
  border-radius: 50%;
  background: #0a0a0a;
  border: 4px solid #252525;
  box-shadow: 0 0 0 1px #111, 0 6px 30px rgba(0, 0, 0, .1);
  display: flex;
  align-items: center;
  justify-content: center;
}
.next-n { width: 28px; height: 28px; display: block; }

/* dock */
.dock {
  margin: 2px 0 0 433px;
  width: 2591px;
  height: 130px;
  flex: none;
  display: flex;
  gap: 28px;
  padding: 19px 24px 0 19px;
  position: relative;
  border-radius: 34px;
  border: 1px solid rgba(255, 255, 255, .22);
  background:
    linear-gradient(180deg, rgba(120, 80, 60, .22), rgba(120, 80, 60, 0) 55%),
    linear-gradient(90deg, #7292bf 0, #7a8fb4 8%, #b98a72 12%, #d98f5e 18%, #e68a58 45%, #e98a5c 70%, #e58f5a 100%);
}
.dock-app { width: 80px; height: 81px; flex: none; position: relative; display: block; }
.ico { width: 80px; height: 81px; display: block; }
.dock-tall { width: 81px; }
.dock-tall + .dock-tall { width: 72px; }
.tall { width: 72px; height: 92px; display: block; margin-top: -5px; }
.run::after {
  content: "";
  position: absolute;
  left: 37px;
  top: 99px;
  width: 7px;
  height: 7px;
  border-radius: 50%;
  background: #6e1000;
}
.run-b::after { background: #0b2a6b; }
.dock-sep { width: 1px; height: 94px; background: #a8562e; flex: none; margin-top: -1px; }
.dock-sep-a { margin-left: 11px; margin-right: 8px; }
.dock-sep-b { margin-left: 10px; margin-right: 12px; }
.hub-mark { color: #ece8f2; }
.cal-m { font: 700 15px Inter, sans-serif; fill: #fff; text-anchor: middle; }
.cal-d { font: 300 47px Inter, sans-serif; fill: #2a2a2a; text-anchor: middle; }
.tile-l { font: 400 22px Inter, sans-serif; fill: #fff; text-anchor: middle; }
.tile-x { font-size: 24px; }
.term { font: 400 24px "DejaVu Sans Mono", monospace; fill: #fff; }
```
